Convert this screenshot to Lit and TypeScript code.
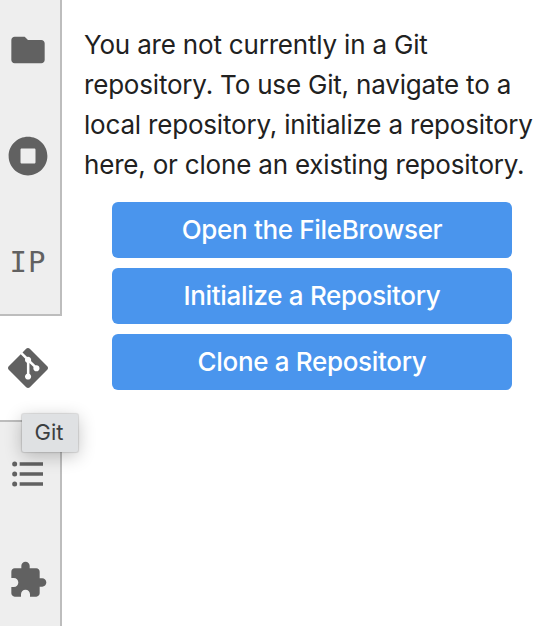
import { LitElement, html, css, svg } from "lit";
import { customElement } from "lit/decorators.js";

const icons = {
  folder: svg`<svg viewBox="0 0 24 24"><path d="M10 4H4c-1.1 0-1.99.9-1.99 2L2 18c0 1.1.9 2 2 2h16c1.1 0 2-.9 2-2V8c0-1.1-.9-2-2-2h-8l-2-2z"/></svg>`,
  running: svg`<svg viewBox="0 0 512 512"><path d="M256 8C119 8 8 119 8 256s111 248 248 248 248-111 248-248S393 8 256 8zm96 328c0 8.8-7.2 16-16 16H176c-8.8 0-16-7.2-16-16V176c0-8.8 7.2-16 16-16h160c8.8 0 16 7.2 16 16v160z"/></svg>`,
  git: svg`<svg viewBox="0 0 24 24"><path d="M23.546 10.93L13.067.452c-.604-.603-1.582-.603-2.188 0L8.708 2.627l2.76 2.76c.645-.215 1.379-.07 1.889.441.516.515.658 1.258.438 1.9l2.658 2.66c.645-.223 1.387-.078 1.9.435.721.72.721 1.884 0 2.604-.719.719-1.881.719-2.6 0-.539-.541-.674-1.337-.404-1.996L12.86 8.955v6.525c.176.086.342.203.488.348.713.721.713 1.883 0 2.6-.719.721-1.889.721-2.609 0-.719-.719-.719-1.879 0-2.598.182-.18.387-.316.605-.406V8.835c-.217-.091-.424-.222-.6-.401-.545-.545-.676-1.342-.396-2.009L7.636 3.7.45 10.881c-.6.605-.6 1.584 0 2.189l10.48 10.477c.604.604 1.582.604 2.186 0l10.43-10.43c.605-.603.605-1.582 0-2.187"/></svg>`,
  toc: svg`<svg viewBox="0 0 24 24"><path d="M7 5h14v2H7V5m0 8v-2h14v2H7M4 4.5A1.5 1.5 0 0 1 5.5 6 1.5 1.5 0 0 1 4 7.5 1.5 1.5 0 0 1 2.5 6 1.5 1.5 0 0 1 4 4.5m0 6A1.5 1.5 0 0 1 5.5 12 1.5 1.5 0 0 1 4 13.5 1.5 1.5 0 0 1 2.5 12 1.5 1.5 0 0 1 4 10.5M7 19v-2h14v2H7m-3-2.5A1.5 1.5 0 0 1 5.5 18 1.5 1.5 0 0 1 4 19.5 1.5 1.5 0 0 1 2.5 18 1.5 1.5 0 0 1 4 16.5z"/></svg>`,
  extension: svg`<svg viewBox="0 0 24 24"><path d="M20.5 11H19V7c0-1.1-.9-2-2-2h-4V3.5C13 2.12 11.88 1 10.5 1S8 2.12 8 3.5V5H4c-1.1 0-1.99.9-1.99 2v3.8H3.5c1.49 0 2.7 1.21 2.7 2.7s-1.21 2.7-2.7 2.7H2V20c0 1.1.9 2 2 2h3.8v-1.5c0-1.49 1.21-2.7 2.7-2.7 1.49 0 2.7 1.21 2.7 2.7V22H17c1.1 0 2-.9 2-2v-4h1.5c1.38 0 2.5-1.12 2.5-2.5S21.88 11 20.5 11z"/></svg>`,
};

@customElement("app-root")
export class AppRoot extends LitElement {
  static styles = css`
    :host {
      display: flex;
      position: relative;
      height: 626px;
      overflow: hidden;
      background: #fff;
      font-family: Inter, "Liberation Sans", sans-serif;
      color: #212121;
    }
    .sidebar {
      flex: none;
      width: 62px;
      display: flex;
      flex-direction: column;
      margin-top: -3px;
    }
    .tab {
      box-sizing: border-box;
      flex: none;
      height: 106px;
      padding-right: 4px;
      border-right: 2px solid #bdbdbd;
      background: #eee;
      display: flex;
      align-items: center;
      justify-content: center;
    }
    .before {
      height: 107px;
      padding-top: 1px;
      border-bottom: 2px solid #bdbdbd;
    }
    .active {
      padding-right: 6px;
      border-right: 0;
      border-bottom: 2px solid #bdbdbd;
      background: #fff;
    }
    .after {
      height: 105px;
      padding-bottom: 1px;
    }
    svg {
      display: block;
      width: 40px;
      height: 40px;
      fill: #616161;
    }
    .ip {
      font: 29px/32px "DejaVu Sans Mono", monospace;
      letter-spacing: 1px;
      color: #616161;
    }
    .panel {
      flex: 1;
      min-width: 0;
      padding: 25px 0 0 22px;
    }
    .message {
      margin: 0;
      font-size: 26px;
      line-height: 40px;
      letter-spacing: -0.19px;
      white-space: nowrap;
    }
    .line {
      display: block;
    }
    .actions {
      display: flex;
      flex-direction: column;
      gap: 10px;
      width: 400px;
      margin: 17px 0 0 28px;
    }
    .button {
      height: 56px;
      padding: 0;
      border: 0;
      border-radius: 6px;
      background: #4a95ed;
      color: #fff;
      font: 500 26px/56px Inter, sans-serif;
      letter-spacing: -0.32px;
      text-align: center;
    }
    .tooltip {
      position: absolute;
      box-sizing: border-box;
      left: 22px;
      top: 414px;
      width: 56px;
      height: 38px;
      padding-right: 2px;
      border-radius: 2px;
      background: #dfe1e3;
      box-shadow: 0 0 1px 1px rgba(0, 0, 0, 0.12), 0 4px 18px rgba(0, 0, 0, 0.24);
      color: #3c3f41;
      font-size: 22px;
      line-height: 37px;
      text-align: center;
    }
  `;

  render() {
    return html`
      <nav class="sidebar">
        <div class="tab">${icons.folder}</div>
        <div class="tab">${icons.running}</div>
        <div class="tab before"><span class="ip">IP</span></div>
        <div class="tab active">${icons.git}</div>
        <div class="tab after">${icons.toc}</div>
        <div class="tab">${icons.extension}</div>
      </nav>
      <main class="panel">
        <p class="message">
          <span class="line">You are not currently in a Git</span>
          <span class="line">repository. To use Git, navigate to a</span>
          <span class="line">local repository, initialize a repository</span>
          <span class="line">here, or clone an existing repository.</span>
        </p>
        <div class="actions">
          <button class="button">Open the FileBrowser</button>
          <button class="button">Initialize a Repository</button>
          <button class="button">Clone a Repository</button>
        </div>
      </main>
      <div class="tooltip">Git</div>
    `;
  }
}
